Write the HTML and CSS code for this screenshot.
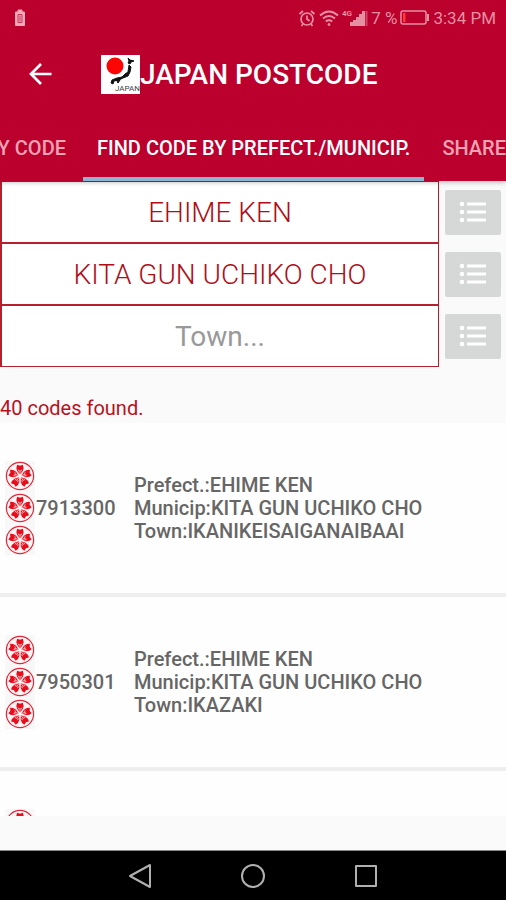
FILE: index.html
```html
<!DOCTYPE html>
<html lang="en">
<head>
    <meta charset="UTF-8">
    <meta name="viewport" content="width=device-width, initial-scale=1.0">
    <title>Japan Postcode</title>
    <link rel="stylesheet" href="styles.css">
</head>
<body>
    <svg class="defs" width="0" height="0" aria-hidden="true">
        <symbol id="list" viewBox="0 0 28 24">
            <g fill="#fff">
                <circle cx="3" cy="4" r="2.3"/><circle cx="3" cy="12" r="2.3"/><circle cx="3" cy="20" r="2.3"/>
                <path d="M8 2.400h19v3.2H8zM8 10.4h19v3.2H8zM8 18.4h19v3.2H8z"/>
            </g>
        </symbol>
        <symbol id="sakura" viewBox="-15 -15 30 30">
            <circle r="13.6" fill="#fff5f5" stroke="#e0283a" stroke-width="1.2"/>
            <g id="petal">
                <path d="M0-1.500L-2.8-5Q-4.400-8.500-2.800-11.300L0-10.200L2.800-11.300Q4.400-8.500 2.8-5Z" fill="#e80c1c"/>
                <path d="M0-2v-4M-1-4.500l-.8-1.800M1-4.500l.8-1.800" stroke="#ffd5d8" stroke-width=".8"/>
            </g>
            <use href="#petal" transform="rotate(72)"/>
            <use href="#petal" transform="rotate(144)"/>
            <use href="#petal" transform="rotate(216)"/>
            <use href="#petal" transform="rotate(288)"/>
        </symbol>
    </svg>

    <header>
        <div class="status-bar">
            <svg class="status-left" width="12" height="18" viewBox="0 0 12 18">
                <path d="M4 1h4v2h2.500v13.500h-9V3H4z" fill="#f3a9b8" stroke="#f3a9b8" stroke-linejoin="round"/>
                <path d="M4 5.500h4v8H4zM6 6.500v6" fill="none" stroke="#c4375a"/>
            </svg>
            <svg width="18" height="18" viewBox="0 0 18 18" fill="none" stroke="#e58fa3" stroke-width="1.700">
                <circle cx="9" cy="10" r="6"/>
                <path d="M9 6.500V10l2.500 2M1.500 5L5 2M16.500 5L13 2M5 15l-1.500 2M13 15l1.500 2"/>
            </svg>
            <svg width="20" height="18" viewBox="0 0 20 18" fill="none" stroke="#e58fa3" stroke-width="2">
                <path d="M1 6.500Q10-1.500 19 6.500M4 9.500Q10 4.500 16 9.500M6.800 12.500Q10 10 13.200 12.500"/>
                <circle cx="10" cy="15.500" r="1" fill="#e58fa3" stroke-width="1"/>
            </svg>
            <svg width="26" height="18" viewBox="0 0 26 18" fill="#e58fa3">
                <text x="0" y="7" font-size="8" font-weight="700">4G</text>
                <path d="M8 17v-4h3v-2h3V8h3V5h3V2h3v15z"/>
                <path d="M24.500 2v15" stroke="#cc4565" stroke-width="2"/>
            </svg>
            <span>7 %</span>
            <svg width="30" height="18" viewBox="0 0 30 18">
                <rect x="1" y="2" width="25" height="13" rx="2" fill="none" stroke="#e58fa3" stroke-width="1.500"/>
                <path d="M27 5h2v7h-2z" fill="#e58fa3"/>
                <path d="M3 4h2.500v9H3z" fill="#ff3b30"/>
            </svg>
            <span>3:34 PM</span>
        </div>

        <div class="toolbar">
            <button class="back" aria-label="Back">
                <svg width="24" height="24" viewBox="0 0 24 24" fill="none" stroke="#fff" stroke-width="2.700">
                    <path d="M23.500 12H3M13 2L3 12L13 22"/>
                </svg>
            </button>
            <svg class="logo" width="39" height="39" viewBox="0 0 39 39">
                <path fill="#fff" d="M0 0h39v39H0z"/>
                <circle cx="14" cy="11" r="8.500" fill="#fb0505"/>
                <path d="M27 3l2 2l4 1l-3 1l-1 2l-2-1l1-2zM28 10l2 2l-1 5l-2 4l-5 2l-4 2l-5 1l-1 3l-2-1l1-3l5-2l5-1l3-3l3-2zM16 26l3-1l-2 3z" fill="#111" stroke="#111"/>
                <text x="14" y="36" font-size="8" fill="#444">JAPAN</text>
            </svg>
            <h1>JAPAN POSTCODE</h1>
        </div>

        <nav class="tabs">
            <a class="tab tab-prev" href="#code">BY CODE</a>
            <a class="tab active" href="#prefect">FIND CODE BY PREFECT./MUNICIP.</a>
            <a class="tab tab-next" href="#share">SHARE</a>
        </nav>
    </header>

    <main>
        <form class="search">
            <div class="field">
                <input type="text" value="EHIME KEN" aria-label="Prefecture">
                <button type="button" aria-label="List prefectures"><svg width="28" height="24"><use href="#list"/></svg></button>
            </div>
            <div class="field">
                <input type="text" value="KITA GUN UCHIKO CHO" aria-label="Municipality">
                <button type="button" aria-label="List municipalities"><svg width="28" height="24"><use href="#list"/></svg></button>
            </div>
            <div class="field">
                <input type="text" placeholder="Town..." aria-label="Town">
                <button type="button" aria-label="List towns"><svg width="28" height="24"><use href="#list"/></svg></button>
            </div>
        </form>

        <p class="count">40 codes found.</p>

        <ul class="results">
            <li class="result">
                <div class="flowers">
                    <svg><use href="#sakura"/></svg>
                    <svg><use href="#sakura"/></svg>
                    <svg><use href="#sakura"/></svg>
                </div>
                <span class="code">7913300</span>
                <div class="details">
                    <p>Prefect.:EHIME KEN</p>
                    <p>Municip:KITA GUN UCHIKO CHO</p>
                    <p>Town:IKANIKEISAIGANAIBAAI</p>
                </div>
            </li>
            <li class="result">
                <div class="flowers">
                    <svg><use href="#sakura"/></svg>
                    <svg><use href="#sakura"/></svg>
                    <svg><use href="#sakura"/></svg>
                </div>
                <span class="code">7950301</span>
                <div class="details">
                    <p>Prefect.:EHIME KEN</p>
                    <p>Municip:KITA GUN UCHIKO CHO</p>
                    <p>Town:IKAZAKI</p>
                </div>
            </li>
            <li class="result">
                <div class="flowers">
                    <svg><use href="#sakura"/></svg>
                    <svg><use href="#sakura"/></svg>
                    <svg><use href="#sakura"/></svg>
                </div>
            </li>
        </ul>
    </main>

    <footer>
        <button aria-label="Back">
            <svg width="24" height="26" viewBox="0 0 24 26"><path d="M22 2v22L2 13z"/></svg>
        </button>
        <button aria-label="Home">
            <svg width="26" height="26" viewBox="0 0 26 26"><circle cx="13" cy="13" r="11"/></svg>
        </button>
        <button aria-label="Recent apps">
            <svg width="24" height="26" viewBox="0 0 24 26"><path d="M2 3h20v20H2z"/></svg>
        </button>
    </footer>
</body>
</html>
```
FILE: styles.css
```css
* {
    box-sizing: border-box;
    margin: 0;
    padding: 0;
}

body {
    font-family: Roboto, "Liberation Sans", sans-serif;
    background-color: #fafafa;
    height: 100vh;
    display: flex;
    flex-direction: column;
    overflow: hidden;
}

svg {
    display: block;
    flex-shrink: 0;
}

button {
    border: none;
    background: none;
    display: flex;
    align-items: center;
    justify-content: center;
    cursor: pointer;
}

.defs {
    position: absolute;
}

header {
    background-color: #bc002d;
    color: white;
    box-shadow: 0 1px 5px rgba(0, 0, 0, 0.3);
    z-index: 1;
}

.status-bar {
    height: 36px;
    padding: 0 10px 0 14px;
    display: flex;
    align-items: center;
    gap: 3px;
    font-size: 17px;
    color: #e58fa3;
}

.status-left {
    margin-right: auto;
}

.toolbar {
    height: 76px;
    padding-left: 28px;
    display: flex;
    align-items: center;
}

.back {
    width: 24px;
    margin-right: 49px;
}

h1 {
    font-size: 28px;
    font-weight: 500;
}

.tabs {
    height: 69px;
    display: grid;
    grid-template-columns: 83px auto 1fr;
    overflow: hidden;
}

.tab {
    display: flex;
    align-items: center;
    padding: 6px 14px 0;
    border-bottom: 4px solid transparent;
    color: #f0a3b3;
    font-size: 20px;
    font-weight: 500;
    text-decoration: none;
    white-space: nowrap;
}

.tab-prev {
    justify-content: flex-end;
    padding-right: 17px;
}

.tab-next {
    padding: 6px 0 0 18px;
}

.tab.active {
    color: white;
    border-bottom-color: #8fb4d2;
}

main {
    flex: 1;
    min-height: 0;
    display: flex;
    flex-direction: column;
    padding-bottom: 34px;
}

.field {
    height: 62px;
    display: grid;
    grid-template-columns: 1fr 56px;
    gap: 6px;
    padding-right: 5px;
    align-items: center;
}

.field input {
    width: 100%;
    height: 62px;
    border: 1px solid #b5202c;
    border-left-width: 2px;
    border-radius: 0;
    background-color: white;
    color: #b00d18;
    font-family: inherit;
    font-size: 28px;
    font-weight: 300;
    text-align: center;
}

.field input::placeholder {
    color: #999;
    font-weight: 400;
}

.field button {
    height: 45px;
    border-radius: 2px;
    background-color: #d6d7d7;
}

.count {
    padding: 29px 0 3px;
    color: #b9101c;
    font-size: 20px;
    line-height: 24px;
}

.results {
    flex: 1;
    min-height: 0;
    overflow: hidden;
    list-style: none;
}

.result {
    height: 174px;
    padding: 0 5px;
    display: flex;
    align-items: center;
    background-color: #fefefe;
    border-bottom: 4px solid #eee;
    color: #666;
    font-size: 20px;
    font-weight: 500;
}

.flowers {
    display: flex;
    flex-direction: column;
    gap: 2px;
    background-color: #f8f8f8;
}

.flowers svg {
    width: 30px;
    height: 30px;
}

.code {
    width: 99px;
    padding-left: 1px;
}

.details {
    line-height: 23px;
}

footer {
    height: 50px;
    padding: 0 84px;
    display: grid;
    grid-template-columns: repeat(3, 1fr);
    border-top: 1px solid #888;
    background-color: black;
}

footer svg {
    fill: none;
    stroke: #b0b0b0;
    stroke-width: 2;
    stroke-linejoin: round;
}
```
